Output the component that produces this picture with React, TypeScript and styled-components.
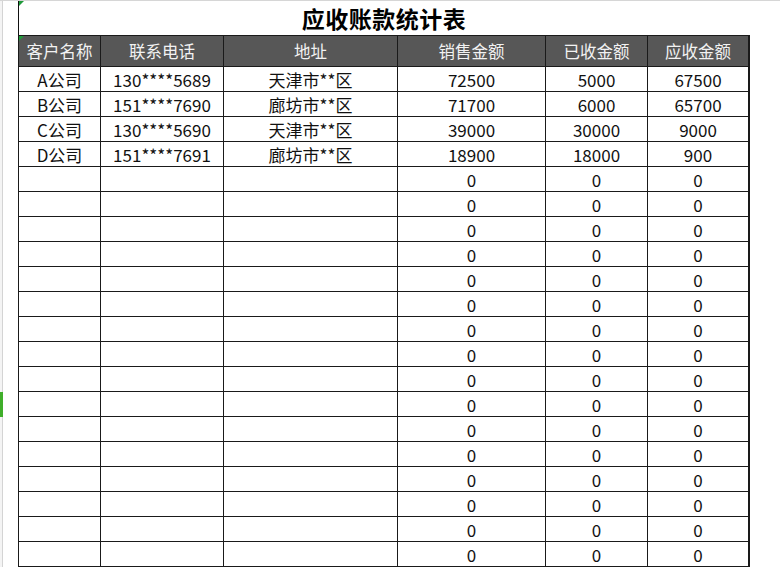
import React from "react";
import styled, { createGlobalStyle } from "styled-components";

const Global = createGlobalStyle`
  html, body { margin: 0; padding: 0; background: #fff; overflow: hidden; }
  body { font-family: "Noto Sans CJK SC", "Microsoft YaHei", sans-serif; }
`;

const COLS = "81px 122px 173px 147px 101px 100px";

const Page = styled.div`
  width: 780px;
  height: 567px;
  display: flex;
  flex-direction: column;
  overflow: hidden;
  position: relative;
`;

const TopLine = styled.div`
  height: 1px;
  background: #d6d6d6;
  flex: none;
`;

const Body = styled.div`
  display: flex;
  flex: 1;
  min-height: 0;
`;

const Gutter = styled.div`
  width: 16px;
  flex: none;
  border-left: 2px solid #f4f4f4;
  display: flex;
`;

const GutterLine = styled.div`
  width: 1px;
  background: #d4d4d4;
`;

const Main = styled.div`
  display: flex;
  flex-direction: column;
`;

const Ticks = styled.div`
  display: grid;
  grid-template-columns: ${COLS};
  column-gap: 1px;
  height: 1px;
  padding: 0 1px;
`;

const Tick = styled.div`
  border-right: 1px solid #d0d0d0;
  margin-right: -1px;
`;

const TitleCell = styled.div`
  position: relative;
  height: 34px;
  width: 730px;
  border-left: 1px solid #111;
  display: flex;
  align-items: center;
  justify-content: center;
  font-size: 23px;
  font-weight: 700;
  color: #000;
  letter-spacing: 0.5px;
`;

const Corner = styled.span`
  position: absolute;
  left: 0;
  top: 0;
  width: 0;
  height: 0;
  border-top: 5px solid #1f9a3a;
  border-right: 5px solid transparent;
`;

const Grid = styled.div`
  display: grid;
  grid-template-columns: ${COLS};
  grid-template-rows: 30px;
  grid-auto-rows: 24px;
  gap: 1px;
  background: #1a1a1a;
  border: 1px solid #1a1a1a;
  width: 730px;
  box-sizing: content-box;
`;

const HeadCell = styled.div`
  position: relative;
  background: #575757;
  color: #f2f2f2;
  font-size: 16.5px;
  display: flex;
  align-items: center;
  justify-content: center;
`;

const Cell = styled.div`
  background: #fff;
  color: #111;
  font-size: 17px;
  display: flex;
  align-items: center;
  justify-content: center;
  line-height: 1;
`;

const RowMark = styled.div`
  position: absolute;
  left: 0;
  top: 392px;
  width: 3px;
  height: 25px;
  background: #3fae2a;
`;

const headers = ["客户名称", "联系电话", "地址", "销售金额", "已收金额", "应收金额"];

const data: (string | number)[][] = [
  ["A公司", "130****5689", "天津市**区", 72500, 5000, 67500],
  ["B公司", "151****7690", "廊坊市**区", 71700, 6000, 65700],
  ["C公司", "130****5690", "天津市**区", 39000, 30000, 9000],
  ["D公司", "151****7691", "廊坊市**区", 18900, 18000, 900],
];
for (let i = 0; i < 16; i++) data.push(["", "", "", 0, 0, 0]);

export default function App() {
  return (
    <Page>
      <Global />
      <TopLine />
      <Body>
        <Gutter>
          <GutterLine />
        </Gutter>
        <Main>
          <Ticks>
            {headers.map((h) => (
              <Tick key={h} />
            ))}
          </Ticks>
          <TitleCell>
            <Corner />
            应收账款统计表
          </TitleCell>
          <Grid>
            {headers.map((h, i) => (
              <HeadCell key={h}>
                {i === 0 && <Corner />}
                {h}
              </HeadCell>
            ))}
            {data.map((row, r) =>
              row.map((v, c) => <Cell key={`${r}-${c}`}>{v}</Cell>)
            )}
          </Grid>
        </Main>
      </Body>
      <RowMark />
    </Page>
  );
}
